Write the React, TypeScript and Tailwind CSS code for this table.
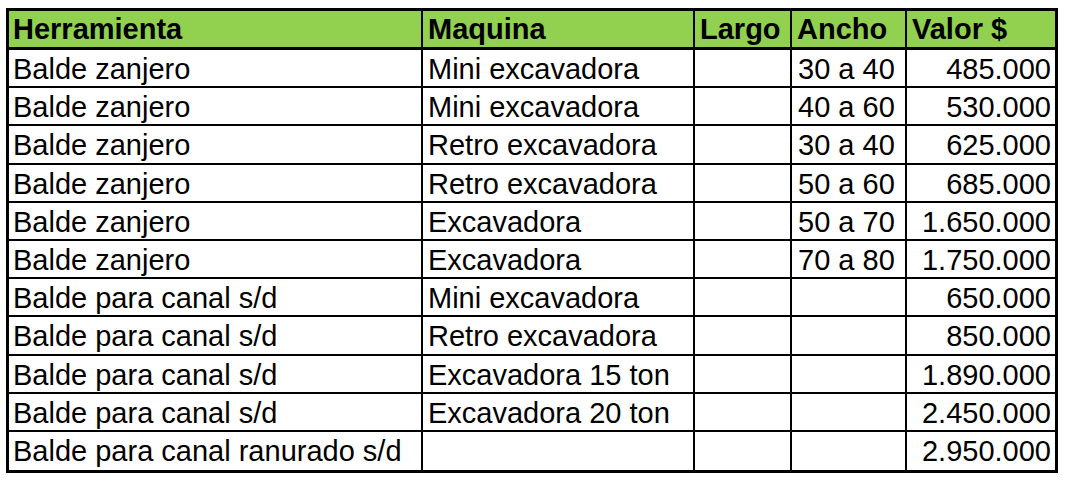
import React from 'react';

interface Row {
  tool: string;
  machine: string;
  largo: string;
  ancho: string;
  valor: string;
}

const rows: Row[] = [
  { tool: 'Balde zanjero', machine: 'Mini excavadora', largo: '', ancho: '30 a 40', valor: '485.000' },
  { tool: 'Balde zanjero', machine: 'Mini excavadora', largo: '', ancho: '40 a 60', valor: '530.000' },
  { tool: 'Balde zanjero', machine: 'Retro excavadora', largo: '', ancho: '30 a 40', valor: '625.000' },
  { tool: 'Balde zanjero', machine: 'Retro excavadora', largo: '', ancho: '50 a 60', valor: '685.000' },
  { tool: 'Balde zanjero', machine: 'Excavadora', largo: '', ancho: '50 a 70', valor: '1.650.000' },
  { tool: 'Balde zanjero', machine: 'Excavadora', largo: '', ancho: '70 a 80', valor: '1.750.000' },
  { tool: 'Balde para canal s/d', machine: 'Mini excavadora', largo: '', ancho: '', valor: '650.000' },
  { tool: 'Balde para canal s/d', machine: 'Retro excavadora', largo: '', ancho: '', valor: '850.000' },
  { tool: 'Balde para canal s/d', machine: 'Excavadora 15 ton', largo: '', ancho: '', valor: '1.890.000' },
  { tool: 'Balde para canal s/d', machine: 'Excavadora 20 ton', largo: '', ancho: '', valor: '2.450.000' },
  { tool: 'Balde para canal ranurado s/d', machine: '', largo: '', ancho: '', valor: '2.950.000' },
];

const cols = 'grid grid-cols-[414px_272px_97px_115px_148px]';

export default function App() {
  return (
    <div className="w-[1069px] h-[488px] bg-white pt-[8px] pl-[6px] font-['Liberation_Sans',Arial,sans-serif] text-black">
      <div className="w-[1052px] border-[3px] border-black">
        <div className={`${cols} h-[39px] bg-[#92d050] border-b-[3px] border-black text-[29px] font-bold leading-[37px]`}>
          <div className="border-r-2 border-black pl-[4px] whitespace-nowrap">Herramienta</div>
          <div className="border-r-2 border-black pl-[5px] whitespace-nowrap">Maquina</div>
          <div className="border-r-2 border-black pl-[5px] whitespace-nowrap">Largo</div>
          <div className="border-r-2 border-black pl-[5px] whitespace-nowrap">Ancho</div>
          <div className="pl-[5px] whitespace-nowrap">Valor $</div>
        </div>
        {rows.map((r, i) => (
          <div
            key={i}
            className={`${cols} text-[29px] leading-[38px] ${
              i < rows.length - 1 ? 'h-[38.2px] border-b-2 border-black' : 'h-[38px]'
            }`}
          >
            <div className="border-r-2 border-black pl-[4px] whitespace-nowrap">{r.tool}</div>
            <div className="border-r-2 border-black pl-[5px] whitespace-nowrap">{r.machine}</div>
            <div className="border-r-2 border-black pl-[5px] whitespace-nowrap">{r.largo}</div>
            <div className="border-r-2 border-black pl-[6px] whitespace-nowrap">{r.ancho}</div>
            <div className="pr-[4px] text-right whitespace-nowrap">{r.valor}</div>
          </div>
        ))}
      </div>
    </div>
  );
}
